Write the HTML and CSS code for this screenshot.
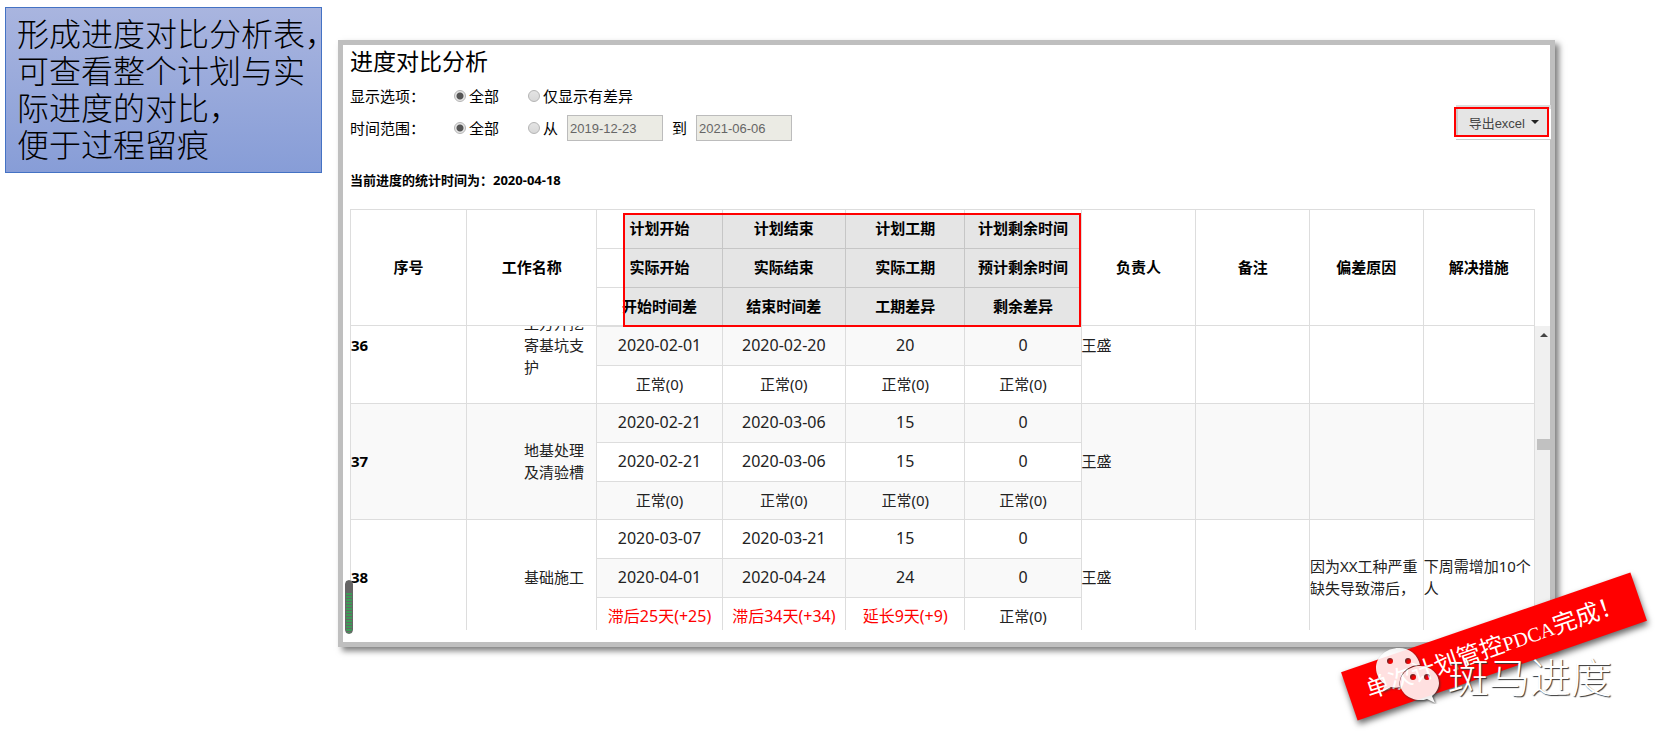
FILE: index.html
```html
<!DOCTYPE html>
<html lang="zh-CN">
<head>
<meta charset="utf-8">
<title>进度对比分析</title>
<link rel="stylesheet" href="styles.css">
</head>
<body>
<main class="slide">
  <aside class="note">形成进度对比分析表，<br>可查看整个计划与实<br>际进度的对比，<br>便于过程留痕</aside>

  <section class="panel">
    <div class="toolbar">
      <div class="filters">
        <h1 class="title">进度对比分析</h1>
        <div class="filter-row">
          <span class="filter-label">显示选项：</span>
          <label class="choice first"><input type="radio" name="show" checked>全部</label>
          <label class="choice"><input type="radio" name="show">仅显示有差异</label>
        </div>
        <div class="filter-row">
          <span class="filter-label">时间范围：</span>
          <label class="choice first"><input type="radio" name="range" checked>全部</label>
          <label class="choice"><input type="radio" name="range">从</label>
          <input class="date" type="text" aria-label="从" value="2019-12-23" disabled>
          <label class="to" for="date-to">到</label>
          <input class="date" id="date-to" type="text" value="2021-06-06" disabled>
        </div>
      </div>
      <div class="export-wrap"><button class="export" type="button">导出excel<span class="caret"></span></button></div>
    </div>
    <p class="stat">当前进度的统计时间为：2020-04-18</p>

    <div class="head">
      <div class="highlight"></div>
      <table class="grid">
        <colgroup><col class="c1"><col class="c2"><col class="c3"><col class="c4"><col class="c5"><col class="c6"><col class="c7"><col class="c8"><col class="c9"><col class="c10"></colgroup>
        <thead>
          <tr><th rowspan="3">序号</th><th rowspan="3">工作名称</th><th>计划开始</th><th>计划结束</th><th>计划工期</th><th>计划剩余时间</th><th rowspan="3">负责人</th><th rowspan="3">备注</th><th rowspan="3">偏差原因</th><th rowspan="3">解决措施</th></tr>
          <tr><th>实际开始</th><th>实际结束</th><th>实际工期</th><th>预计剩余时间</th></tr>
          <tr class="last"><th>开始时间差</th><th>结束时间差</th><th>工期差异</th><th>剩余差异</th></tr>
        </thead>
      </table>
    </div>

    <div class="body">
      <div class="rows">
        <table class="grid scrolled">
          <colgroup><col class="c1"><col class="c2"><col class="c3"><col class="c4"><col class="c5"><col class="c6"><col class="c7"><col class="c8"><col class="c9"><col class="c10"></colgroup>
          <tbody>
            <tr><th class="no" rowspan="3">36</th><td class="name" rowspan="3">土方开挖寄基坑支护</td><td class="num"></td><td class="num"></td><td class="num"></td><td class="num"></td><td class="text" rowspan="3">王盛</td><td rowspan="3"></td><td rowspan="3"></td><td rowspan="3"></td></tr>
            <tr class="shade"><td class="num">2020-02-01</td><td class="num">2020-02-20</td><td class="num">20</td><td class="num">0</td></tr>
            <tr class="last"><td>正常(0)</td><td>正常(0)</td><td>正常(0)</td><td>正常(0)</td></tr>
            <tr class="shade"><th class="no" rowspan="3">37</th><td class="name" rowspan="3">地基处理及清验槽</td><td class="num">2020-02-21</td><td class="num">2020-03-06</td><td class="num">15</td><td class="num">0</td><td class="text" rowspan="3">王盛</td><td rowspan="3"></td><td rowspan="3"></td><td rowspan="3"></td></tr>
            <tr><td class="num">2020-02-21</td><td class="num">2020-03-06</td><td class="num">15</td><td class="num">0</td></tr>
            <tr class="shade last"><td>正常(0)</td><td>正常(0)</td><td>正常(0)</td><td>正常(0)</td></tr>
            <tr><th class="no" rowspan="3">38</th><td class="name" rowspan="3">基础施工</td><td class="num">2020-03-07</td><td class="num">2020-03-21</td><td class="num">15</td><td class="num">0</td><td class="text" rowspan="3">王盛</td><td rowspan="3"></td><td class="text" rowspan="3">因为XX工种严重缺失导致滞后，</td><td class="text" rowspan="3">下周需增加10个人</td></tr>
            <tr class="shade"><td class="num">2020-04-01</td><td class="num">2020-04-24</td><td class="num">24</td><td class="num">0</td></tr>
            <tr class="last"><td class="late">滞后25天(+25)</td><td class="late">滞后34天(+34)</td><td class="late">延长9天(+9)</td><td>正常(0)</td></tr>
          </tbody>
        </table>
      </div>
      <div class="scrollbar"><span class="arrow-up"></span><span class="thumb"></span></div>
    </div>
    <div class="meter"></div>
  </section>

  <div class="ribbon">单次计划管控<span class="latin">PDCA</span>完成！</div>
  <div class="watermark">
    <svg class="wechat" viewBox="0 0 68 58" width="68" height="58" aria-hidden="true">
      <path fill-rule="evenodd" d="M24 2C11 2 1 11 1 22c0 7 4 13 9 16l-3 8 9-5c3 1 6 1 9 0C23 30 31 19 45 19 43 9 35 2 24 2ZM15 12a3 3 0 1 1 0 6 3 3 0 0 1 0-6Zm18 0a3 3 0 1 1 0 6 3 3 0 0 1 0-6Z"/>
      <path fill-rule="evenodd" d="M45 20C34 20 25 28 25 37s9 17 20 17c3 0 5 0 7-1l8 4-3-7c4-3 7-8 7-13 0-9-8-17-19-17ZM38 28a3 3 0 1 1 0 6 3 3 0 0 1 0-6Zm14 0a3 3 0 1 1 0 6 3 3 0 0 1 0-6Z"/>
    </svg>
    <span class="brand">斑马进度</span>
  </div>
</main>
</body>
</html>
```
FILE: styles.css
```css
* { box-sizing: border-box; }

body {
  margin: 0;
  background: #fff;
  color: #000;
  font-family: "Noto Sans", "Noto Sans CJK SC", sans-serif;
  font-size: 15px;
  line-height: 22px;
}

.slide {
  position: relative;
  display: flex;
  align-items: flex-start;
  gap: 16px;
  min-height: 100vh;
  padding: 7px 111px 32px 5px;
  overflow: hidden;
}

.note {
  flex: none;
  padding: 6px 4px 10px 11px;
  width: 317px;
  border: 1px solid #4472c4;
  background: linear-gradient(#a9b5df, #879dd7);
  font: 300 32px/37px "Noto Sans CJK SC", sans-serif;
  white-space: nowrap;
}

.panel {
  position: relative;
  flex: 1;
  min-width: 0;
  margin-top: 33px;
  padding: 0 0 12px 7px;
  border: 5px solid #bfbfbf;
  background: #fff;
  box-shadow: 4px 4px 6px rgba(0, 0, 0, .5);
}

.toolbar { display: flex; justify-content: space-between; align-items: flex-end; }

.title { margin: 0 0 3px; font-size: 23px; font-weight: 400; line-height: 32px; }

.filter-row { display: flex; align-items: center; height: 32px; }
.filter-label { width: 104px; }
.choice { display: flex; align-items: center; gap: 3px; }
.choice.first { width: 74px; }

.choice input {
  appearance: none;
  width: 12px;
  height: 12px;
  margin: 0;
  border: 1px solid #b4b4b4;
  border-radius: 50%;
  background: linear-gradient(#e4e4e4, #d8d8d8);
}
.choice input:checked { background: radial-gradient(circle, #555 0 3px, #e6e6e6 4px); }

.date {
  width: 96px;
  height: 26px;
  margin-left: 9px;
  padding: 0 2px;
  border: 1px solid #bcbcbc;
  background: #ebebe4;
  color: #666;
  font: 13px "Liberation Sans", sans-serif;
}
.to { margin-left: 9px; }

.export-wrap {
  margin: 0 1px 7px 0;
  border: 2px solid #f00;
  box-shadow: 2px 2px 0 #fff, 2px 3px 0 #ccc, 2px -2px 0 #ddd;
}
.export {
  display: flex;
  align-items: center;
  gap: 6px;
  height: 26px;
  padding: 0 8px 0 13px;
  border: 0;
  background: #e5e5e5;
  color: #444;
  font: 13px "Liberation Sans", "Noto Sans CJK SC", sans-serif;
  box-shadow: inset 2px 0 0 #ccc;
}
.caret {
  border: 4px solid transparent;
  border-top-color: #222;
  border-bottom: 0;
}

.stat { margin: 25px 0 18px; font-size: 13px; font-weight: 700; }

.head { position: relative; margin-right: 15px; }

.grid {
  width: 100%;
  table-layout: fixed;
  border-collapse: collapse;
}
.grid tr { height: 39px; }
.grid tr.last { height: 38px; }
.grid th, .grid td {
  padding: 0 0 2px;
  border: 1px solid #ddd;
  text-align: center;
}
.grid td { color: #222; }
.c1 { width: 9.8%; }
.c2 { width: 11%; }
.c3 { width: 10.6%; }
.c4 { width: 10.4%; }
.c5 { width: 10.1%; }
.c6 { width: 9.8%; }
.c7 { width: 9.7%; }
.c8 { width: 9.6%; }
.c9 { width: 9.6%; }
.c10 { width: 9.4%; }

.highlight {
  position: absolute;
  top: 4px;
  bottom: -1px;
  left: 23%;
  width: 38.7%;
  border: 2px solid #f00;
  background: rgba(0, 0, 0, .1);
}

.body { display: flex; height: 304px; }
.rows { flex: 1; min-width: 0; overflow: hidden; }
.scrolled { margin-top: -39px; }
.shade td, .shade th { background: #f9f9f9; }
.grid .no, .grid .text { text-align: left; }
.grid .name { padding: 0 10px 2px 57px; text-align: left; }
.grid .num, .grid .late { font-size: 16px; }
.grid .late { color: #f00; }

.scrollbar {
  display: flex;
  flex-direction: column;
  align-items: flex-end;
  width: 15px;
  background: #f0f0f0;
}
.arrow-up {
  margin: 7px 2px 102px 0;
  border: 4px solid transparent;
  border-bottom-color: #444;
  border-top: 0;
}
.thumb { width: 13px; height: 11px; background: #c1c1c1; }

.meter {
  position: absolute;
  left: 2px;
  bottom: 8px;
  width: 8px;
  height: 54px;
  border: 1px solid #666;
  border-radius: 4px;
  background: linear-gradient(#666 12px, transparent 12px), repeating-linear-gradient(#3d9a57 0 2px, #666 2px 3px);
}

.ribbon {
  position: absolute;
  right: 19px;
  top: 621px;
  width: 306px;
  background: #f00;
  color: #fff;
  font: 24px/48px "Noto Sans CJK SC", sans-serif;
  text-align: center;
  white-space: nowrap;
  transform: rotate(-19deg);
  box-shadow: 0 4px 6px rgba(0, 0, 0, .6);
}
.latin { font-family: "Liberation Serif", serif; font-size: 20px; }

.watermark {
  position: absolute;
  right: 54px;
  top: 645px;
  display: flex;
  align-items: center;
  gap: 5px;
}
.wechat { fill: #fff; opacity: .88; }
.wechat path { filter: drop-shadow(1px 1px 1px #333); }
.brand {
  color: #fff;
  font: 300 41px/60px "Noto Sans CJK SC", sans-serif;
  text-shadow: 1px 1px 1px #333;
}
```
